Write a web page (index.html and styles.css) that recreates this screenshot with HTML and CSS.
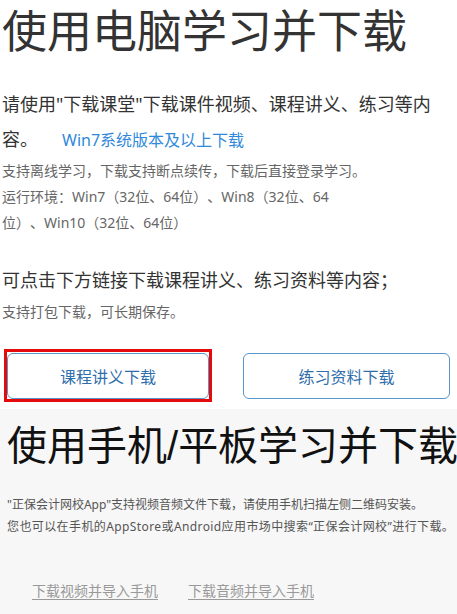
FILE: index.html
```html
<!DOCTYPE html>
<html lang="zh-CN">
<head>
<meta charset="utf-8">
<title>下载</title>
<link rel="stylesheet" href="styles.css">
</head>
<body>
<section class="pc">
  <h1 class="pc-title">使用电脑学习并下载</h1>
  <p class="lead">请使用"下载课堂"下载课件视频、课程讲义、练习等内容。<a class="win-link" href="#">Win7系统版本及以上下载</a></p>
  <p class="notes">支持离线学习，下载支持断点续传，下载后直接登录学习。<br>运行环境：Win7（32位、64位）、Win8（32位、64<br>位）、Win10（32位、64位）</p>
  <p class="tip">可点击下方链接下载课程讲义、练习资料等内容；</p>
  <p class="sub">支持打包下载，可长期保存。</p>
  <div class="btn-row">
    <a class="btn is-marked" href="#">课程讲义下载</a>
    <a class="btn" href="#">练习资料下载</a>
  </div>
</section>
<section class="mobile">
  <h2 class="mobile-title">使用手机<span class="slash">/</span>平板学习并下载</h2>
  <p class="mobile-text">"正保会计网校App"支持视频音频文件下载，请使用手机扫描左侧二维码安装。<br><span class="wide">您也可以在手机的AppStore或Android应用市场中搜索“正保会计网校”进行下载。</span></p>
  <div class="mobile-links">
    <a class="mlink" href="#">下载视频并导入手机</a>
    <a class="mlink" href="#">下载音频并导入手机</a>
  </div>
</section>
</body>
</html>
```
FILE: styles.css
```css
html, body {
  margin: 0;
  padding: 0;
  background: #ffffff;
}
body {
  font-family: "Noto Sans", "Noto Sans CJK SC", sans-serif;
  color: #333333;
  width: 457px;
  height: 614px;
  overflow: hidden;
  text-spacing-trim: space-all;
  text-autospace: no-autospace;
}
p, h1, h2 { margin: 0; }
a { text-decoration: none; }

.pc {
  padding-left: 2px;
}
.pc-title {
  font-size: 45px;
  font-weight: 400;
  line-height: 62px;
  color: #333333;
  white-space: nowrap;
}
.lead {
  margin-top: 25px;
  font-size: 18px;
  line-height: 35px;
  color: #333333;
}
.win-link {
  margin-left: 24px;
  color: #2f88dc;
  font-size: 16px;
}
.notes {
  font-size: 14px;
  line-height: 26px;
  color: #666666;
}
.tip {
  margin-top: 29px;
  font-size: 18px;
  line-height: 30px;
  color: #333333;
}
.sub {
  margin-top: 5px;
  font-size: 14px;
  line-height: 24px;
  color: #666666;
}
.btn-row {
  margin-top: 29px;
  padding-left: 5px;
  display: grid;
  grid-template-columns: 202px 207px;
  column-gap: 34px;
}
.btn {
  display: flex;
  align-items: center;
  justify-content: center;
  height: 46px;
  box-sizing: border-box;
  border: 1px solid #5a93c9;
  border-radius: 6px;
  background: #ffffff;
  color: #2f6eac;
  font-size: 16px;
}
.is-marked {
  position: relative;
}
.is-marked::after {
  content: "";
  position: absolute;
  top: -5px;
  left: -4px;
  right: -4px;
  bottom: -4px;
  border: 3px solid #e30b0b;
  pointer-events: none;
}

.mobile {
  margin-top: 10px;
  background: #f7f7f7;
  padding: 8px 0 0 7px;
  height: 210px;
  box-sizing: border-box;
}
.mobile-title {
  font-size: 40px;
  font-weight: 400;
  line-height: 56px;
  color: #111111;
  white-space: nowrap;
}
.slash {
  font-family: "Liberation Sans", sans-serif;
}
.mobile-text {
  margin-top: 20px;
  font-size: 12px;
  line-height: 22px;
  color: #555555;
  white-space: nowrap;
}
.wide {
  letter-spacing: 0.4px;
}
.mobile-links {
  margin-top: 41px;
  padding-left: 25px;
  display: flex;
  gap: 30px;
  font-size: 14px;
  line-height: 24px;
}
.mlink {
  color: #999999;
  text-decoration: underline;
  text-underline-offset: 3px;
}
```
